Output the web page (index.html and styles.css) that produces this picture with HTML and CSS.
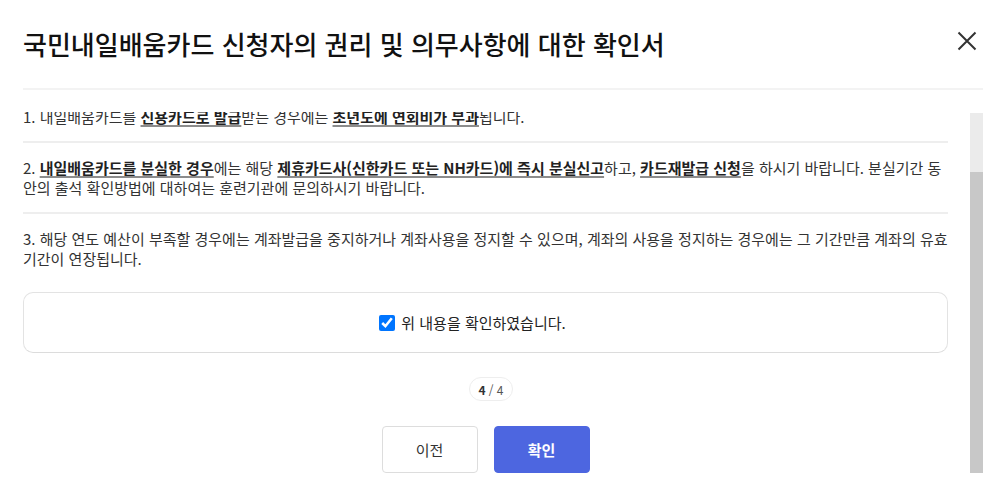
FILE: index.html
```html
<!DOCTYPE html>
<html lang="ko">
<head>
<meta charset="utf-8">
<title>확인서</title>
<link rel="stylesheet" href="styles.css">
</head>
<body>
<div class="modal">
  <header class="modal-header">
    <h1 class="modal-title">국민내일배움카드 신청자의 권리 및 의무사항에 대한 확인서</h1>
    <button class="close-btn" type="button" aria-label="닫기">
      <svg width="20" height="20" viewBox="0 0 20 20"><path d="M1.5 1.5 L18.5 18.5 M18.5 1.5 L1.5 18.5" stroke="#333" stroke-width="2" fill="none"/></svg>
    </button>
  </header>
  <div class="modal-body">
    <div class="scroll-area">
      <div class="item">1. 내일배움카드를 <b>신용카드로 발급</b>받는 경우에는 <b>초년도에 연회비가 부과</b>됩니다.</div>
      <div class="item">2. <b>내일배움카드를 분실한 경우</b>에는 해당 <b>제휴카드사(신한카드 또는 NH카드)에 즉시 분실신고</b>하고, <b>카드재발급 신청</b>을 하시기 바랍니다. 분실기간 동안의 출석 확인방법에 대하여는 훈련기관에 문의하시기 바랍니다.</div>
      <div class="item item-last">3. 해당 연도 예산이 부족할 경우에는 계좌발급을 중지하거나 계좌사용을 정지할 수 있으며, 계좌의 사용을 정지하는 경우에는 그 기간만큼 계좌의 유효 기간이 연장됩니다.</div>
      <div class="confirm-box">
        <label class="confirm-label"><input type="checkbox" class="confirm-check" checked> 위 내용을 확인하였습니다.</label>
      </div>
      <div class="pager-row"><span class="pager"><b>4</b> / 4</span></div>
      <div class="btn-row">
        <button class="btn btn-prev" type="button">이전</button>
        <button class="btn btn-ok" type="button">확인</button>
      </div>
    </div>
    <div class="scrollbar"><div class="scroll-thumb"></div></div>
  </div>
</div>
</body>
</html>
```
FILE: styles.css
```css
* { box-sizing: border-box; }
html, body { margin: 0; padding: 0; background: #fff; }
body {
  font-family: "Noto Sans CJK KR", "Noto Sans", sans-serif;
  color: #333;
  width: 1007px;
  height: 497px;
  overflow: hidden;
}
.modal { padding: 0 24px 0 23px; }
.modal-header {
  height: 90px;
  display: flex;
  align-items: center;
  justify-content: space-between;
  border-bottom: 2px solid #f3f3f3;
  padding-bottom: 2px;
}
.modal-title {
  margin: 0;
  font-size: 26px;
  font-weight: 500;
  color: #111;
  letter-spacing: 0;
}
.close-btn {
  border: 0;
  background: none;
  padding: 0;
  width: 20px;
  height: 20px;
  margin-right: 6px;
  margin-top: -4px;
  display: flex;
}
.modal-body {
  margin-top: 22px;
  height: 361px;
  display: flex;
  gap: 22px;
}
.scroll-area {
  width: 925px;
  height: 361px;
  overflow: hidden;
  display: flex;
  flex-direction: column;
  justify-content: flex-end;
}
.item {
  font-size: 15px;
  line-height: 19.5px;
  padding: 15px 0;
  border-bottom: 2px solid #eeeeee;
  word-break: break-all;
  color: #333;
  flex-shrink: 0;
}
.item b {
  font-weight: 700;
  color: #222;
  text-decoration: underline;
  text-decoration-color: #8c8c8c;
  text-decoration-thickness: 2px;
  text-underline-offset: 2px;
}
.item-last { border-bottom: 0; padding-bottom: 24px; }
.confirm-box {
  flex-shrink: 0;
  height: 61px;
  border: 1px solid #e3e3e3;
  border-bottom-color: #dcdcdc;
  border-radius: 10px;
  display: flex;
  align-items: center;
  justify-content: center;
  padding-right: 26px;
}
.confirm-label {
  display: flex;
  align-items: center;
  gap: 6px;
  font-size: 15px;
  color: #222;
}
.confirm-check {
  width: 16px;
  height: 16px;
  margin: 0;
  accent-color: #0075ff;
}
.pager-row {
  flex-shrink: 0;
  display: flex;
  justify-content: center;
  padding-left: 11px;
  margin-top: 24px;
  margin-bottom: 25px;
}
.pager {
  height: 24px;
  padding: 0 9px;
  border: 1px solid #eeeeee;
  border-radius: 12px;
  font-size: 12px;
  color: #555;
  display: flex;
  align-items: center;
}
.pager b { color: #333; margin-right: 3px; }
.btn-row {
  flex-shrink: 0;
  display: flex;
  justify-content: center;
  gap: 16px;
}
.btn {
  width: 96px;
  height: 47px;
  border-radius: 4px;
  font-family: inherit;
  font-size: 15px;
}
.btn-prev { background: #fff; border: 1px solid #dddddd; color: #333; }
.btn-ok { background: #4d66e0; border: 1px solid #4d66e0; color: #fff; font-weight: 700; }
.scrollbar {
  width: 13px;
  height: 360px;
  margin-top: 1px;
  background: #ebebeb;
  display: flex;
  flex-direction: column;
  justify-content: flex-end;
}
.scroll-thumb { height: 301px; background: #c8c8c8; }
```
